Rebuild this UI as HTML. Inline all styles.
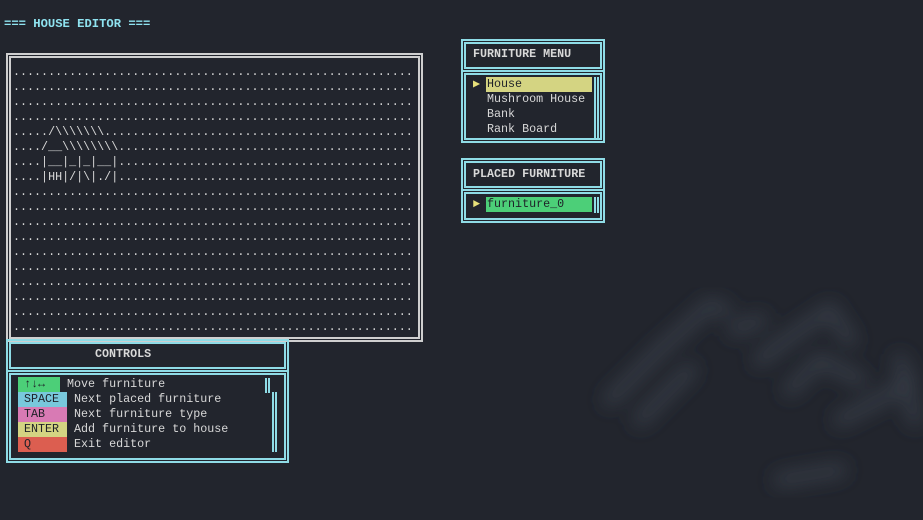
<!DOCTYPE html>
<html><head><meta charset="utf-8"><style>
*{margin:0;padding:0;box-sizing:border-box}
body{width:923px;height:520px;overflow:hidden;background:#22252d;font-family:"Liberation Mono",monospace;font-size:11.7px;color:#d8d8d8;position:relative}
.a{position:absolute;white-space:pre;line-height:15px}
.box{position:absolute;border:5px double #cfcfcf}
.cy{border-color:#8fdce6}
.b{font-weight:bold}
.k{position:absolute;height:15px;line-height:15px;padding-left:6px;color:#1e2128}
.sb{position:absolute;width:5px;border-left:2px solid #8fdce6;border-right:2px solid #8fdce6}
</style></head><body>
<svg style="position:absolute;left:0;top:0" width="923" height="520"><defs><filter id="f"><feGaussianBlur stdDeviation="9"/></filter></defs>
<g filter="url(#f)" fill="none" stroke="#363a44" stroke-width="14" stroke-linecap="round">
<path d="M610 400 L660 350 L710 305 L725 310"/>
<path d="M640 420 L690 370"/>
<path d="M735 330 L760 320"/>
<path d="M760 360 L800 330 L830 310 L850 340"/>
<path d="M790 390 L820 360 L860 380"/>
<path d="M840 420 L880 400 L910 380"/>
<path d="M900 360 L915 420"/>
<path d="M780 480 L840 470"/>
</g></svg>
<div class="a b" style="left:4px;top:17px;color:#8fe3f0;font-size:12.2px">=== HOUSE EDITOR ===</div>
<div class="box" style="left:6px;top:53px;width:417px;height:289px"></div>
<div class="a" style="left:13px;top:65px">.........................................................
.........................................................
.........................................................
.........................................................
...../\\\\\\\............................................
..../__\\\\\\\\..........................................
....|__|_|_|__|..........................................
....|HH|/|\|./|..........................................
.........................................................
.........................................................
.........................................................
.........................................................
.........................................................
.........................................................
.........................................................
.........................................................
.........................................................
.........................................................</div>

<div class="box cy" style="left:461px;top:39px;width:144px;height:33px"></div>
<div class="a b" style="left:473px;top:47px">FURNITURE MENU</div>
<div class="box cy" style="left:461px;top:70px;width:144px;height:73px"></div>
<div class="a" style="left:473px;top:77px;color:#e8e07a">▶</div>
<div class="k" style="left:486px;top:77px;width:106px;background:#d4d482;padding-left:1px">House</div>
<div class="a" style="left:487px;top:92px">Mushroom House
Bank
Rank Board</div>
<div class="sb" style="left:594px;top:77px;height:62px"></div>

<div class="box cy" style="left:461px;top:158px;width:144px;height:33px"></div>
<div class="a b" style="left:473px;top:167px">PLACED FURNITURE</div>
<div class="box cy" style="left:461px;top:189px;width:144px;height:34px"></div>
<div class="a" style="left:473px;top:197px;color:#e8e07a">►</div>
<div class="k" style="left:486px;top:197px;width:106px;background:#4ccf78;padding-left:1px">furniture_0</div>
<div class="sb" style="left:594px;top:197px;height:16px"></div>

<div class="box cy" style="left:6px;top:339px;width:283px;height:33px"></div>
<div class="a b" style="left:95px;top:347px">CONTROLS</div>
<div class="box cy" style="left:6px;top:370px;width:283px;height:93px"></div>
<div class="k" style="left:18px;top:377px;width:42px;background:#4ccf78">↑↓↔</div>
<div class="k" style="left:18px;top:392px;width:49px;background:#78c8dc">SPACE</div>
<div class="k" style="left:18px;top:407px;width:49px;background:#d87ab4">TAB</div>
<div class="k" style="left:18px;top:422px;width:49px;background:#d4d482">ENTER</div>
<div class="k" style="left:18px;top:437px;width:49px;background:#dc5e50">Q</div>
<div class="a" style="left:67px;top:377px">Move furniture</div>
<div class="a" style="left:74px;top:392px">Next placed furniture
Next furniture type
Add furniture to house
Exit editor</div>
<div class="sb" style="left:265px;top:378px;height:15px"></div>
<div class="sb" style="left:272px;top:392px;height:60px"></div>
</body></html>
